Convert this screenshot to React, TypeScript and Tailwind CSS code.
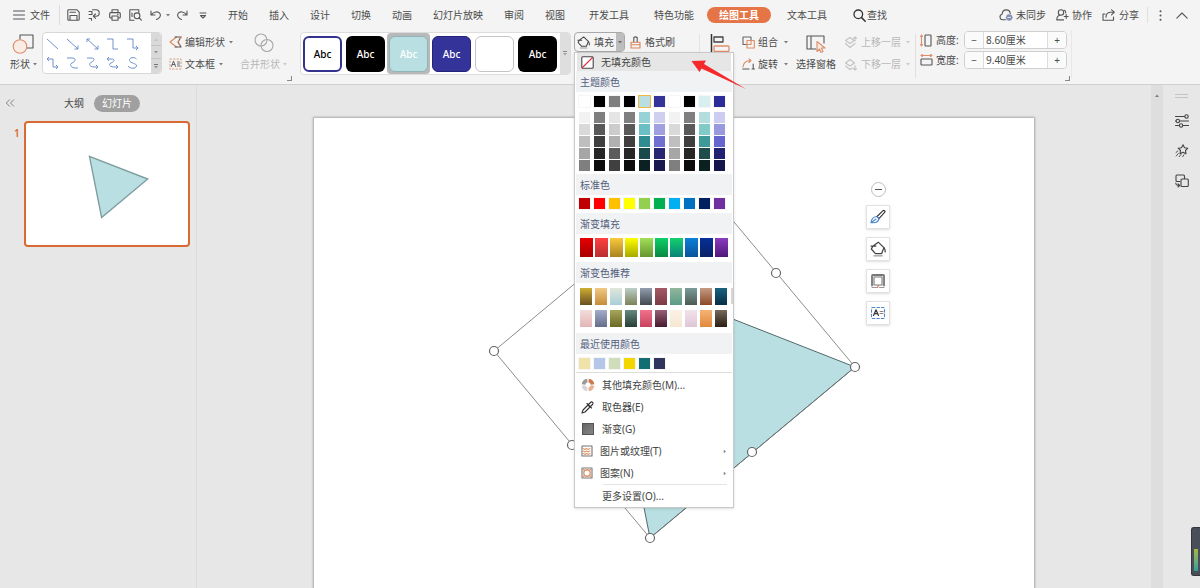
import type { ReactNode } from 'react';

const themeTop = [
  'bg-white', 'bg-black', 'bg-[#7f7f7f]', 'bg-black', 'bg-[#b9dfe2] outline outline-[#f0b840]',
  'bg-[#33339a]', 'bg-white', 'bg-black', 'bg-[#d9efef]', 'bg-[#2c2c98]',
];

const themeShades = [
  ['bg-[#f2f2f2]', 'bg-[#d9d9d9]', 'bg-[#bfbfbf]', 'bg-[#a6a6a6]', 'bg-[#7f7f7f]'],
  ['bg-[#7f7f7f]', 'bg-[#595959]', 'bg-[#3f3f3f]', 'bg-[#262626]', 'bg-[#0c0c0c]'],
  ['bg-[#e5e5e5]', 'bg-[#cccccc]', 'bg-[#b0b0b0]', 'bg-[#5c5c5c]', 'bg-[#404040]'],
  ['bg-[#7f7f7f]', 'bg-[#595959]', 'bg-[#3f3f3f]', 'bg-[#262626]', 'bg-[#0c0c0c]'],
  ['bg-[#96d2d6]', 'bg-[#6abfc5]', 'bg-[#2f8c90]', 'bg-[#18494b]', 'bg-[#0a2021]'],
  ['bg-[#cfcff0]', 'bg-[#a0a0e0]', 'bg-[#7070d0]', 'bg-[#262673]', 'bg-[#19194d]'],
  ['bg-[#f2f2f2]', 'bg-[#d9d9d9]', 'bg-[#bfbfbf]', 'bg-[#a6a6a6]', 'bg-[#7f7f7f]'],
  ['bg-[#7f7f7f]', 'bg-[#595959]', 'bg-[#3f3f3f]', 'bg-[#262626]', 'bg-[#0c0c0c]'],
  ['bg-[#b4dede]', 'bg-[#80cbc8]', 'bg-[#3e9a98]', 'bg-[#1f4d4c]', 'bg-[#0c2020]'],
  ['bg-[#cccdf0]', 'bg-[#9999e0]', 'bg-[#6666d0]', 'bg-[#212172]', 'bg-[#16164c]'],
];

const standard = [
  'bg-[#c00000]', 'bg-[#ff0000]', 'bg-[#ffc000]', 'bg-[#ffff00]', 'bg-[#92d050]',
  'bg-[#00b050]', 'bg-[#00b0f0]', 'bg-[#0070c0]', 'bg-[#002060]', 'bg-[#7030a0]',
];

const gradients = [
  'from-[#e60000] to-[#a80000]', 'from-[#ff4040] to-[#b83030]', 'from-[#fcc93c] to-[#a88420]',
  'from-[#ffff00] to-[#a9a900]', 'from-[#a2e058] to-[#66962f]', 'from-[#0ed068] to-[#088843]',
  'from-[#16d06a] to-[#0c8378]', 'from-[#0a80d8] to-[#0a529a]', 'from-[#06309a] to-[#082066]',
  'from-[#8a3cc0] to-[#501878]',
];

const recommended = [
  'from-[#cfae35] to-[#69501f]', 'from-[#f0c984] to-[#c58d38]', 'from-[#e1e6da] to-[#a9cfd8]',
  'from-[#bcd0c8] to-[#7c8259]', 'from-[#929dae] to-[#434a50]', 'from-[#a55a66] to-[#7b3b46]',
  'from-[#92b79c] to-[#5a9a87]', 'from-[#7c9c99] to-[#4c5b53]', 'from-[#c39b84] to-[#8a4a26]',
  'from-[#19637d] to-[#082e46]',
  'from-[#f2dcdc] to-[#e3b5b5]', 'from-[#a3acc8] to-[#656f8a]', 'from-[#a6a65c] to-[#6b6a25]',
  'from-[#678a7e] to-[#273f38]', 'from-[#ef718c] to-[#c8425e]', 'from-[#9a6078] to-[#481c30]',
  'from-[#fbf2e6] to-[#f6e7d3]', 'from-[#f3e2ea] to-[#dfc6d5]', 'from-[#f7b273] to-[#e0893b]',
  'from-[#776a5c] to-[#2b2013]',
];

const recent = ['bg-[#f1e1ab]', 'bg-[#b5c7e8]', 'bg-[#cfddbb]', 'bg-[#f3d500]', 'bg-[#126e72]', 'bg-[#303560]'];

function Svg({ w, h, children }: { w: number; h: number; children: ReactNode }) {
  return (
    <svg width={w} height={h} viewBox={`0 0 ${w} ${h}`} fill="none" stroke="#555" strokeWidth="1.1"
      strokeLinecap="round" strokeLinejoin="round" className="shrink-0" aria-hidden="true">
      {children}
    </svg>
  );
}

function Caret() {
  return (
    <svg width="4" height="3" viewBox="0 0 4 3" className="shrink-0 fill-current opacity-70" aria-hidden="true">
      <path d="M0 0h4L2 2.5z" />
    </svg>
  );
}

function Corner() {
  return (
    <Svg w={5} h={5}><path d="M4.5 .5v4h-4" stroke="#888" /></Svg>
  );
}

function Bucket({ w, h }: { w: number; h: number }) {
  return (
    <svg width={w} height={h} viewBox="0 0 14 14" fill="none" stroke="#444" strokeWidth="1.1" strokeLinejoin="round" className="shrink-0" aria-hidden="true">
      <path d="M2.5 4.5L7.2 1l5 4.8-2 5.2H4.8L1.2 7zM.5 4.5h5" />
      <path d="M12.2 5.8c1 1.4 1.3 2.6 1 4.2" />
      <path d="M3 13h8" stroke="#999" />
    </svg>
  );
}

function Tab({ children }: { children: ReactNode }) {
  return <button className="h-5 px-[10px] whitespace-nowrap">{children}</button>;
}

function TitleBar() {
  return (
    <header className="flex h-[30px] shrink-0 items-center pl-[13px] pr-[12px]">
      <button className="flex items-center gap-[5px]">
        <Svg w={12} h={10}><path d="M.5 1h11M.5 5h11M.5 9h11" /></Svg>
        文件
      </button>
      <span className="mr-[7px] ml-[9px] h-5 w-px bg-[#dcdcdc]" />
      <div className="flex items-center gap-2">
        <button aria-label="保存">
          <Svg w={13} h={12}><path d="M.8 1.6Q.8.7 1.7.7h8l2.5 2.5v7q0 1-1 1H1.7q-.9 0-.9-1zM3 3.2h5.5M3 11V6.5h7V11" /></Svg>
        </button>
        <button aria-label="输出">
          <Svg w={13} h={12}><path d="M1 2.5h3M4.500.8h3.500a3.200 3.200 0 010 6.400H5.5M7.5 5L5.3 7.200l2.200 2.100M4 2.500v3M1 5.500h3M1 9.500h2.500v1.700" /></Svg>
        </button>
        <button aria-label="打印">
          <Svg w={12} h={12}><path d="M3 3.5V.8h6v2.7M3 9H1.7Q.7 9 .7 8V4.6q0-1 1-1h8.6q1 0 1 1V8q0 1-1 1H9M3 7h6v4.3H3zM8.5 5.3h.6" /></Svg>
        </button>
        <button aria-label="预览">
          <Svg w={13} h={12}><path d="M5 11.2H.8V.7h9v2.5" /><circle cx="8" cy="6.8" r="2.9" /><path d="M10.2 9l2.2 2.2M3 4v3.5" /></Svg>
        </button>
      </div>
      <button aria-label="撤销" className="ml-2 flex items-center gap-1">
        <Svg w={12} h={11}><path d="M1 1v4h4M1.3 4.7C4 1.5 8 1 9.8 3.3c1.6 2.3 0 5-3.3 6.2" /></Svg>
        <Caret />
      </button>
      <button aria-label="恢复" className="ml-[6px]">
        <Svg w={12} h={11}><path d="M11 1v4H7M10.7 4.7C8 1.5 4 1 2.2 3.3c-1.6 2.3 0 5 3.3 6.2" /></Svg>
      </button>
      <button aria-label="自定义快速访问" className="ml-[11px]">
        <Svg w={8} h={7}><path d="M1 1h6M1.500 3.500L4 6l2.500-2.500z" /></Svg>
      </button>
      <nav className="ml-[11px] flex items-center gap-px">
        <Tab>开始</Tab><Tab>插入</Tab><Tab>设计</Tab><Tab>切换</Tab><Tab>动画</Tab>
        <Tab>幻灯片放映</Tab><Tab>审阅</Tab><Tab>视图</Tab>
      </nav>
      <nav className="ml-1 flex items-center gap-[5px]">
        <Tab>开发工具</Tab><Tab>特色功能</Tab>
      </nav>
      <button aria-current="page" className="mx-[3px] h-4 rounded-full bg-[#e57446] px-3 font-bold whitespace-nowrap text-white">绘图工具</button>
      <div className="ml-[3px]"><Tab>文本工具</Tab></div>
      <button className="ml-[16px] flex items-center gap-px whitespace-nowrap">
        <Svg w={13} h={13}><circle cx="5.3" cy="5.3" r="4.3" stroke="#333" strokeWidth="1.3" /><path d="M8.6 8.6l3.6 3.6" stroke="#333" strokeWidth="1.5" /></Svg>
        查找
      </button>
      <div className="ml-auto flex items-center gap-[10px] whitespace-nowrap">
        <button className="flex items-center gap-[3px]">
          <Svg w={14} h={12}>
            <path d="M6.5 10.8H3.6a2.8 2.8 0 01-.5-5.5C3.3 2.6 5 .9 7.2.9c2.3 0 3.8 1.5 4 3.6" />
            <circle cx="10.2" cy="8.4" r="3" fill="#8490b4" stroke="#8490b4" strokeWidth=".6" /><path d="M8.8 8.4h2.8" stroke="#fff" strokeWidth=".8" />
          </Svg>
          未同步
        </button>
        <button className="flex items-center gap-[3px]">
          <Svg w={13} h={12}><circle cx="5" cy="3.5" r="2.7" /><path d="M3.5 6.2C1.6 6.8.8 8.2.8 10.9h6.700M8.500 1.300q1.500.7 1.200 2.700M8.200 7.500h4M10.200 5.500v4" /></Svg>
          协作
        </button>
        <button className="flex items-center gap-[3px]">
          <Svg w={14} h={12}><path d="M3 5H1v6.200h10.500V8M4 8.200C4 5 6 3.200 9 3.200h3M9.500.8L12.4 3.2 9.500 5.8" /></Svg>
          分享
        </button>
      </div>
      <span className="ml-[8px] h-4 w-px bg-[#e0e0e0]" />
      <button aria-label="更多" className="ml-[11px]">
        <svg width="3" height="11" viewBox="0 0 3 11" fill="#555" aria-hidden="true"><circle cx="1.5" cy="1.3" r="1" /><circle cx="1.5" cy="5.5" r="1" /><circle cx="1.5" cy="9.7" r="1" /></svg>
      </button>
      <button aria-label="收起功能区" className="ml-[14px]">
        <Svg w={12} h={7}><path d="M.8 6.2L6 1l5.2 5.2" /></Svg>
      </button>
    </header>
  );
}

const linePaths = [
  'M1 1l11 10', 'M1 1l11 10M12 7.5V11H8.5', 'M1 1l11 10M12 7.5V11H8.5M1 4V1h3', 'M1 1h6v10h5', 'M1 1h6v9h5M10 8l2 2-2 2',
  'M1 2h6v8h5M3 0L1 2l2 2M10 8l2 2-2 2', 'M1 1h5c5 0 3 4 0 5s-1 5 3 5h3', 'M1 1h4c5 0 3 3 0 4.500s-1 4.500 3 4.500h4M10 8l2 2-2 2',
  'M1 2h4c5 0 3 3 0 4s-1 4 3 4h4M3 0L1 2l2 2M10 8l2 2-2 2', 'M10.500 2C8-.5 3 .5 3.500 3.500S11 6 10.500 9 4 12 2 9',
];

function ShapeGallery() {
  return (
    <div className="mt-[2px] flex h-[42px] w-[120px] overflow-hidden rounded-sm border border-[#d8d8d8] bg-white">
      <div className="grid grow grid-cols-5 items-center justify-items-center py-px pr-[9px] pl-0">
        {linePaths.map((d) => (
          <button key={d} aria-label="线条">
            <svg width="13" height="12" viewBox="0 0 13 12" fill="none" stroke="#6f92cc" aria-hidden="true"><path d={d} /></svg>
          </button>
        ))}
      </div>
      <div className="flex w-[10px] flex-col divide-y divide-[#c4c4c4] bg-[#d9d9d9] text-[#777]">
        <button aria-label="上一行" className="grid grow place-items-center text-[#bbb]"><span className="rotate-180"><Caret /></span></button>
        <button aria-label="下一行" className="grid grow place-items-center"><Caret /></button>
        <button aria-label="全部形状" className="flex grow flex-col items-center justify-center gap-px"><span className="h-px w-1 bg-current" /><Caret /></button>
      </div>
    </div>
  );
}

const styleBoxes = [
  { box: 'border-2 border-[#33338f] bg-white text-black', wrap: '', label: 'Abc' },
  { box: 'bg-black text-white', wrap: '', label: 'Abc' },
  { box: 'border border-[#8fb5b8] bg-[#b9dfe2] text-white', wrap: 'bg-[#b9b9b9]', label: 'Abc' },
  { box: 'border border-[#23237a] bg-[#33339a] text-white', wrap: '', label: 'Abc' },
  { box: 'border border-[#c4c4c4] bg-white', wrap: '', label: '' },
  { box: 'bg-black text-white', wrap: '', label: 'Abc' },
];

function StyleGallery() {
  return (
    <div className="mt-[2px] flex h-[43px] w-[271px] overflow-hidden rounded-sm border border-[#dcdcdc] bg-white">
      <div className="flex grow items-center justify-between pr-px">
        {styleBoxes.map((s, i) => (
          <button key={i} aria-label={'样式 ' + (i + 1)} className={'grid h-[41px] w-[43px] place-items-center rounded-sm ' + s.wrap}>
            <span className={'grid h-9 w-[39px] place-items-center rounded-md font-medium ' + s.box}>{s.label}</span>
          </button>
        ))}
      </div>
      <button aria-label="更多样式" className="flex w-[10px] flex-col items-center justify-center gap-px bg-[#dedede] text-[#888]">
        <span className="h-px w-1 bg-current" /><Caret />
      </button>
    </div>
  );
}

function MenuHeader({ children }: { children: ReactNode }) {
  return <h3 className="mx-px flex h-[21px] items-center bg-[#f1f2f4] pl-1 text-[#51607c]">{children}</h3>;
}

function Swatches({ colors }: { colors: string[] }) {
  return (
    <div className="flex gap-1 px-1">
      {colors.map((c, i) => (
        <button key={i} aria-label={'颜色 ' + (i + 1)} className={'size-[11px] shadow-[0_0_0_1px_#0000000a] ' + c} />
      ))}
    </div>
  );
}

function MenuItem({ icon, more, children }: { icon?: ReactNode; more?: boolean; children: ReactNode }) {
  return (
    <button className="flex h-[22px] w-full items-center pr-[6px] text-left">
      <span className={(more ? 'w-[19px] ' : 'w-[21px] ') + 'ml-[6px] flex shrink-0 items-center'}>{icon}</span>
      <span className="grow">{children}</span>
      {more && <span className="-rotate-90 text-[#555]"><Caret /></span>}
    </button>
  );
}

function FillMenu() {
  return (
    <div className="absolute top-full left-0 z-20 w-40 border border-[#c9c9c9] bg-white text-[#444] shadow-sm">
      <button className="mx-[2px] flex h-[18px] w-[154px] items-center bg-[#e6e6e6] pl-1">
        <Svg w={13} h={13}><rect x=".8" y=".8" width="11.400" height="11.400" rx="1" fill="#fff" stroke="#444" /><path d="M1.500 11.500l10-10" stroke="#d8323c" /></Svg>
        <span className="pl-[7px]">无填充颜色</span>
      </button>
      <MenuHeader>主题颜色</MenuHeader>
      <div className="pt-1 pb-[5px]"><Swatches colors={themeTop} /></div>
      <div className="flex gap-1 px-1 pb-[3px]">
        {themeShades.map((col, i) => (
          <div key={i} className="flex flex-col gap-px">
            {col.map((c, j) => <button key={j} aria-label={'主题色 ' + (i + 1) + '-' + (j + 1)} className={'size-[11px] ' + c} />)}
          </div>
        ))}
      </div>
      <MenuHeader>标准色</MenuHeader>
      <div className="pt-[3px] pb-1"><Swatches colors={standard} /></div>
      <MenuHeader>渐变填充</MenuHeader>
      <div className="flex gap-[2px] px-[5px] pt-1 pb-[5px]">
        {gradients.map((g, i) => <button key={i} aria-label={'渐变 ' + (i + 1)} className={'h-[19px] w-[13px] bg-linear-to-b ' + g} />)}
      </div>
      <MenuHeader>渐变色推荐</MenuHeader>
      <div className="flex items-start pt-[5px] pb-[6px] pl-[5px]">
        <div className="grid grid-cols-10 gap-x-[3px] gap-y-[5px]">
          {recommended.map((g, i) => <button key={i} aria-label={'推荐渐变 ' + (i + 1)} className={'h-[17px] w-3 bg-linear-to-b ' + g} />)}
        </div>
        <span className="ml-auto h-4 w-[2px] bg-[#d5d5d5]" />
      </div>
      <MenuHeader>最近使用颜色</MenuHeader>
      <div className="pt-1 pb-[3px]"><Swatches colors={recent} /></div>
      <div className="mx-px mb-px h-px bg-[#dedede]" />
      <MenuItem icon={
        <svg width="14" height="14" viewBox="0 0 14 14" fill="none" strokeWidth="3.600" aria-hidden="true">
          <path d="M7.600 2.500a4.500 4.500 0 013.900 3.900" stroke="#cc7a4c" /><path d="M11.500 7.600a4.500 4.500 0 01-3.900 3.900" stroke="#e8b08e" />
          <path d="M6.400 11.500a4.500 4.500 0 01-3.900-3.900" stroke="#d4d4d4" /><path d="M2.500 6.400a4.500 4.500 0 013.900-3.900" stroke="#999" />
        </svg>}>其他填充颜色(M)...</MenuItem>
      <MenuItem icon={
        <Svg w={13} h={13}><path d="M1 12l1-3 5-5 2 2-5 5zM6 2.500L10.500 7M7.500 3.500l2-2c1.500-1.500 3.500.5 2 2l-2 2" stroke="#333" strokeWidth="1.100" /></Svg>}>取色器(E)</MenuItem>
      <MenuItem icon={<span className="ml-px size-3 border border-[#555] bg-linear-to-br from-[#666] to-[#858585]" />}>渐变(G)</MenuItem>
      <MenuItem more icon={
        <Svg w={12} h={12}><rect x="1" y="1" width="10" height="10" stroke="#777" /><path d="M2.500 3.500l1.500 1 1.500-1 1.500 1 2-1M2.500 6l1.500 1 1.500-1 1.500 1 2-1M2.500 8.500l1.500 1 1.500-1 1.500 1 2-1" stroke="#e09a70" /></Svg>}>图片或纹理(T)</MenuItem>
      <MenuItem more icon={
        <Svg w={12} h={12}><rect x="1" y="1" width="10" height="10" stroke="#777" /><circle cx="6" cy="6" r="3.200" stroke="#dc9468" strokeWidth="1.400" /><path d="M2.500 2.500l1 1M9.500 2.500l-1 1M2.500 9.500l1-1M9.500 9.500l-1-1" stroke="#dc9468" /></Svg>}>图案(N)</MenuItem>
      <div className="mr-[6px] ml-7 h-px bg-[#e4e4e4]" />
      <MenuItem>更多设置(O)...</MenuItem>
      <svg width="56" height="32" viewBox="0 0 56 32" className="pointer-events-none absolute top-[6px] left-[116px]" aria-hidden="true">
        <path d="M.5 2L15 1.500l-2 3.500L55 30 10.500 9.500 8.500 13z" fill="#f5292b" />
      </svg>
    </div>
  );
}

function Stepper({ id, label, value, icon }: { id: string; label: string; value: string; icon: ReactNode }) {
  return (
    <div className="flex h-[18px] items-center">
      <span className="flex w-4">{icon}</span>
      <label htmlFor={id} className="w-7 whitespace-nowrap">{label}</label>
      <div className="flex h-[18px] w-[103px] overflow-hidden rounded-sm border border-[#cfcfcf] bg-white">
        <button aria-label={label + '减小'} className="w-[19px] border-r border-[#dcdcdc] bg-[#fafafa]">−</button>
        <input id={id} defaultValue={value} className="w-0 grow px-[2px] outline-none" />
        <button aria-label={label + '增大'} className="w-[19px] border-l border-[#dcdcdc] bg-[#fafafa]">+</button>
      </div>
    </div>
  );
}

function Ribbon() {
  const row = 'flex h-[22px] items-center whitespace-nowrap ';
  return (
    <div className="flex h-[55px] shrink-0 items-start border-b border-[#d0d0d0]">
      <button className="ml-[10px] flex w-8 flex-col pt-1">
        <span className="flex h-[20px] pl-[2px]">
          <Svg w={22} h={20}><path d="M8 5V1h13v13h-6" stroke="#555" /><circle cx="8" cy="12.500" r="6.800" fill="#f9ece5" stroke="#dc8e68" /></Svg>
        </span>
        <span className="flex items-center gap-[3px] leading-5">形状<Caret /></span>
      </button>
      <ShapeGallery />
      <div className="ml-[7px] flex flex-col pt-px">
        <button className={row + 'gap-[3px]'}>
          <Svg w={13} h={12}><path d="M7.500 1L1 6l6.500 5" stroke="#d9875c" /><path d="M6 1h6L9 6l3 5H6" /><path d="M12 1L9 6l3 5" stroke="#d9875c" strokeWidth="1.500" strokeDasharray="1 3" /></Svg>
          编辑形状<span className="ml-px"><Caret /></span>
        </button>
        <button className={row + 'gap-[3px]'}>
          <Svg w={13} h={12}><rect x="1" y="1" width="11" height="10" stroke="#d9a07e" strokeDasharray="1.500 2" /><path d="M2.500 8.500l2-5.500 2 5.500M3.300 6.500h2.500M8.500 4h2M8.500 6h2M8.500 8h2" strokeWidth=".9" /></Svg>
          文本框<span className="ml-px"><Caret /></span>
        </button>
      </div>
      <button className="ml-[7px] flex w-[47px] flex-col pt-[3px] text-[#b8b8b8]">
        <span className="flex h-[21px] pl-[14px]">
          <Svg w={20} h={20}><circle cx="7" cy="7" r="6" stroke="#a8a8a8" /><circle cx="13" cy="12.500" r="6" stroke="#a8a8a8" /></Svg>
        </span>
        <span className="flex items-center gap-[3px] leading-5 whitespace-nowrap">合并形状<Caret /></span>
      </button>
      <div className="flex h-[51px] w-[13px] items-end"><Corner /></div>
      <StyleGallery />
      <div className="relative ml-[3px] mt-[2px]">
        <button aria-expanded="true" className="flex h-5 w-[51px] items-center overflow-hidden rounded-sm border border-[#a9a9a9] whitespace-nowrap">
          <span className="flex grow items-center gap-1 pl-[2px]"><Bucket w={13} h={13} />填充</span>
          <span className="grid h-full w-2 place-items-center bg-[#bdbdbd]"><Caret /></span>
        </button>
        <FillMenu />
      </div>
      <button className={row + 'mt-px ml-[5px] gap-1'}>
        <Svg w={11} h={13}><path d="M3.800 6V1.500q1.700-1.200 3.400 0V6" /><path d="M1 12V6.300h9V12zM1 8.800h9" stroke="#d9875c" /></Svg>
        格式刷
      </button>
      <span className="mt-1 ml-6 h-10 w-px bg-[#e4e4e4]" />
      <button aria-label="对齐" className="mt-1 ml-[10px]">
        <Svg w={21} h={20}><path d="M1.500 0v20" stroke="#333" strokeWidth="1.500" /><rect x="4" y="3" width="9" height="5" stroke="#444" strokeWidth="1.300" /><rect x="4" y="12" width="15" height="5.500" rx="1" stroke="#dc8e68" strokeWidth="1.300" /></Svg>
      </button>
      <div className="ml-[11px] flex flex-col pt-px">
        <button className={row + 'gap-[3px]'}>
          <Svg w={13} h={13}><path d="M5 8.500H1V1h8v3" stroke="#666" /><path d="M5 4.500h7.300V12H5z" stroke="#dc8e68" /><path d="M9 5v3.500H5" stroke="#dc8e68" /></Svg>
          组合<span className="ml-[3px]"><Caret /></span>
        </button>
        <button className={row + 'gap-[3px]'}>
          <Svg w={13} h={12}><path d="M1 9C1.500 5 4 2.500 8.500 2.500M7 .800l2 1.700-2 2" stroke="#dc8e68" /><path d="M.800 11H7M10 11h2.500M11.200 6v5" /></Svg>
          旋转<span className="ml-[3px]"><Caret /></span>
        </button>
      </div>
      <button className="ml-2 flex flex-col items-center pt-[5px]">
        <span className="flex h-[19px]"><Svg w={21} h={19}><path d="M10 14H1V1h17v7M5 1v13" /><path d="M11 6.500v10l2.500-2.500 1.500 3.500 2-1-1.500-3.500H19z" fill="#f9ece5" stroke="#dc8e68" /></Svg></span>
        <span className="leading-5 whitespace-nowrap">选择窗格</span>
      </button>
      <div className="ml-2 flex flex-col pt-px text-[#b8b8b8]">
        <button className={row + 'gap-1'}>
          <Svg w={13} h={13}><path d="M6 1.500L1.500 4.500 6 7.500l4-3zM1.500 7.500l4.500 4 5-4M11 5V1M9.500 2.300L11 1l1.500 1.300" stroke="#c2c2c2" /></Svg>
          上移一层<span className="ml-px"><Caret /></span>
        </button>
        <button className={row + 'gap-1'}>
          <Svg w={13} h={13}><path d="M6 1.500L1.500 5 6 8l4.500-3zM1.500 8L6 11.500 8.500 10M11 7.500v4.500M9.500 10.700L11 12l1.500-1.300" stroke="#c2c2c2" /></Svg>
          下移一层<span className="ml-px"><Caret /></span>
        </button>
      </div>
      <span className="mt-1 ml-[5px] h-11 w-px bg-[#e0e0e0]" />
      <div className="ml-1 flex flex-col gap-[2px] pt-px">
        <Stepper id="shape-height" label="高度:" value="8.60厘米" icon={<Svg w={12} h={13}><path d="M1.500 1v11M.5 2.500l1-1.500 1 1.500M.5 10.500l1 1.500 1-1.500" stroke="#dc8e68" /><rect x="5" y="1" width="6" height="11" rx=".5" /></Svg>} />
        <Stepper id="shape-width" label="宽度:" value="9.40厘米" icon={<Svg w={13} h={12}><path d="M1 1.500h11M2.500.5L1 1.500l1.500 1M10.500.5l1.500 1-1.500 1" stroke="#dc8e68" /><rect x="1" y="5" width="11" height="6" rx=".5" /></Svg>} />
      </div>
      <div className="-ml-[2px] flex h-[51px] w-[6px] items-end"><Corner /></div>
      <span className="h-12 w-px bg-[#e8e8e8]" />
    </div>
  );
}

function SlidePanel() {
  return (
    <aside className="w-[197px] shrink-0 border-r border-[#dcdcdc]">
      <div className="flex h-[36px] items-center pl-[5px]">
        <button aria-label="收起面板"><Svg w={10} h={8}><path d="M4.500.8L1.300 4l3.200 3.200M8.700.8L5.500 4l3.200 3.200" stroke="#777" strokeWidth=".9" /></Svg></button>
        <button className="ml-[49px]">大纲</button>
        <button className="ml-[10px] h-[17px] rounded-full bg-[#a0a0a0] px-2 text-white">幻灯片</button>
      </div>
      <div className="flex items-start pr-[6px]">
        <span className="w-6 shrink-0 pt-1 pl-[14px] font-semibold text-[#e0662f]">1</span>
        <button aria-label="幻灯片 1" className="grow rounded-sm border-2 border-[#da6a34] bg-white">
          <svg viewBox="0 0 720 540" className="block w-full" aria-hidden="true">
            <path d="M282 148L541 249 336 420z" fill="#b9dfe2" stroke="#7d9c9f" strokeWidth="6" />
          </svg>
        </button>
      </div>
    </aside>
  );
}

const handles = [[180, 233], [385, 62], [282, 147], [462, 155], [541, 249], [438, 334], [336, 420], [258, 327]];

function FloatButton({ label, children }: { label: string; children: ReactNode }) {
  return <button aria-label={label} className="grid size-6 place-items-center border border-[#e2e2e2] bg-white shadow">{children}</button>;
}

function Canvas() {
  return (
    <main className="min-w-0 grow overflow-hidden px-4 pt-[33px]">
      <div className="relative mx-auto w-[720px] bg-white shadow-[0_0_2px_1px_#a8a8a8]">
        <svg viewBox="0 0 720 540" className="block w-full" role="img" aria-label="三角形">
          <path d="M282.500 147.500L541 249 336 420z" fill="#b9dfe2" stroke="#52696c" />
          <path d="M180 233L385 62 541 249 336 420z" fill="none" stroke="#6e6e6e" strokeWidth=".8" />
          {handles.map(([x, y]) => <circle key={x} cx={x} cy={y} r="4.500" fill="#fff" stroke="#666" strokeWidth="1.200" />)}
        </svg>
        <div className="absolute top-16 left-[552px] flex flex-col items-center gap-2">
          <button aria-label="收起" className="grid size-[15px] place-items-center rounded-full border border-[#bdbdbd] bg-white"><span className="h-px w-[7px] bg-[#555]" /></button>
          <FloatButton label="样式">
            <Svg w={16} h={16}><path d="M7 7.500L13 1.700c1-.800 2.500.3 1.800 1.500L9 9.700z" stroke="#333" /><path d="M7 7.500L9 9.700c-.5 3-3.500 4.500-8 4C1.500 10 3.500 7.500 7 7.500zM2 13l4-3" stroke="#4b86cf" /></Svg>
          </FloatButton>
          <FloatButton label="填充"><Bucket w={16} h={16} /></FloatButton>
          <FloatButton label="轮廓">
            <Svg w={16} h={16}><rect x="4" y="4" width="8" height="8" stroke="#777" /><path d="M2 12.500V2.800q0-.8.8-.8h10.400q.8 0 .8.8v9.700" stroke="#777" strokeWidth="1.800" /><path d="M2 14.500h4.500M9.500 14.500H14" stroke="#999" /><path d="M7.500 14.500l1-2" stroke="#e06a5a" /></Svg>
          </FloatButton>
          <FloatButton label="文本">
            <Svg w={16} h={16}><rect x="1.500" y="2.500" width="13" height="11" rx="1" stroke="#4b86cf" strokeDasharray="2.500 2" /><path d="M3.500 10.500L6 4.800l2.500 5.700M4.400 8.700h3.200" stroke="#333" strokeWidth="1.200" /><path d="M10 6.500h3M10 8.500h3" stroke="#888" /></Svg>
          </FloatButton>
        </div>
      </div>
    </main>
  );
}

export default function App() {
  return (
    <div className="flex h-screen flex-col overflow-hidden bg-[#f4f4f4] font-['Noto_Sans','Noto_Sans_CJK_SC',sans-serif] text-[10px] leading-4 text-[#4a4a4a]">
      <TitleBar />
      <Ribbon />
      <div className="flex min-h-0 grow bg-[#e7e7e7]">
        <SlidePanel />
        <Canvas />
        <div className="flex w-3 shrink-0 justify-center bg-[#dedede] pt-[9px] text-[#555]">
          <button aria-label="向上滚动" className="h-[3px] rotate-180"><Caret /></button>
        </div>
        <aside className="flex w-[37px] shrink-0 flex-col items-center pt-[9px]">
          <span className="h-1 w-[13px] border-y border-[#c4c4c4]" />
          <div className="flex flex-col gap-4 pt-4">
            <button aria-label="属性"><Svg w={14} h={14}><path d="M.5 2.500h9M4.500 7h9M.5 7h.6M.5 11.500h3.500M8 11.500h5.500" stroke="#444" /><circle cx="11.500" cy="2.500" r="1.700" stroke="#444" /><circle cx="2.800" cy="7" r="1.700" stroke="#444" /><circle cx="6" cy="11.500" r="1.700" stroke="#444" /></Svg></button>
            <button aria-label="动画"><Svg w={14} h={14}><path d="M8 .8l1.500 2.900 3.300.5-2.300 2.300.5 3.300-3-1.500-3 1.500.5-3.300-2.300-2.300 3.300-.5z" stroke="#444" /><path d="M2.800 7L1 8.500M3.300 9.500L1.200 12M6 10.500l-1.800 2.200M9 10.700l-1.300 2" stroke="#444" strokeWidth=".9" /></Svg></button>
            <button aria-label="切换"><Svg w={14} h={14}><path d="M5 7.500H2q-1 0-1-1V2q0-1 1-1h6.500q1 0 1 1v2.500" stroke="#444" /><rect x="6" y="5" width="7.300" height="7.500" rx="1" stroke="#444" /><path d="M.800 9c0 2 .700 2.500 3.500 2.500M3 9.800l1.700 1.700L3 13" stroke="#444" /></Svg></button>
          </div>
          <div className="mt-auto mb-3 w-[9px] self-end rounded-l-[3px] border border-r-0 border-[#33363f] bg-[#4a4e59] px-[2px] pt-[21px] pb-1">
            <div className="h-[22px] w-1 bg-linear-to-b from-[#a3b83e] to-[#2f9c96]" />
          </div>
        </aside>
      </div>
    </div>
  );
}
